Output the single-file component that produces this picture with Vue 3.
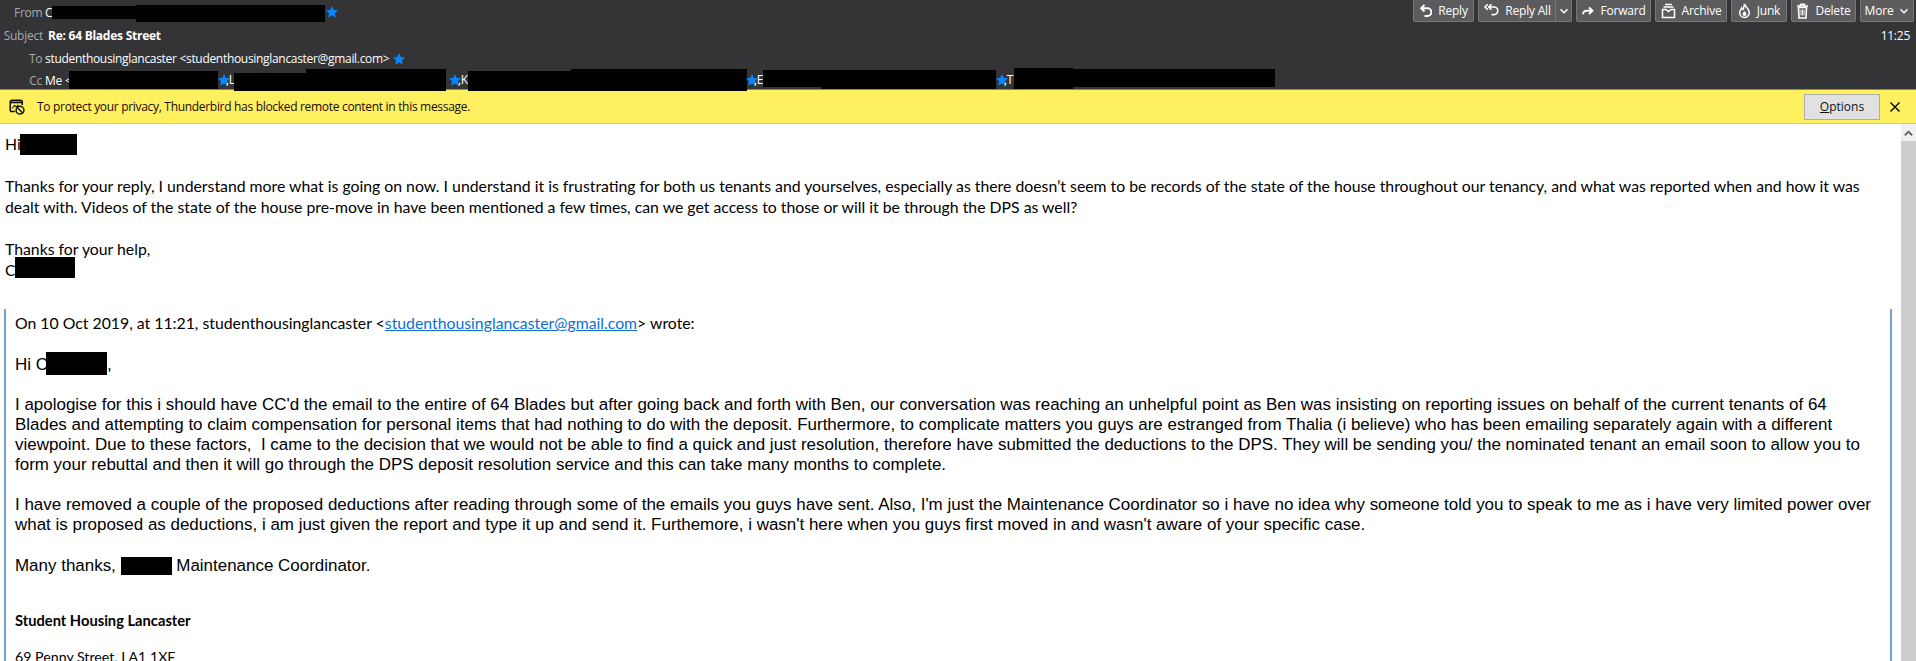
<template>
  <div class="window">
    <header class="headers">
      <div class="row row-from">
        <span class="label from-label">From</span>
        <span class="val">C<span class="redact r-from1" /><span class="redact r-from2" /></span>
        <svg class="star" viewBox="0 0 24 24"><path :d="starPath" /></svg>
        <div class="toolbar">
          <button
            v-for="b in buttons"
            :key="b.name"
            class="tb"
            :class="{ split: b.split }"
            :style="{ width: b.width + 'px' }"
          >
            <span class="tb-main">
              <svg v-if="b.w" class="tb-icon" :style="{ width: b.w + 'px' }" :viewBox="'0 0 ' + b.w + ' 16'" v-html="b.svg" />
              <span>{{ b.name }}</span>
              <svg v-if="b.more" class="chev" viewBox="0 0 10 10"><path d="M1.5 3.200 5 6.700l3.500-3.500" /></svg>
            </span>
            <span v-if="b.split" class="split-part">
              <svg class="chev" viewBox="0 0 10 10"><path d="M1.500 3.200 5 6.700l3.500-3.500" /></svg>
            </span>
          </button>
        </div>
      </div>
      <div class="row row-subject">
        <span class="label subj-label">Subject</span>
        <span class="subject">Re: 64 Blades Street</span>
        <span class="time">11:25</span>
      </div>
      <div class="row row-to">
        <span class="label to-label">To</span>
        <span class="val to-val">studenthousinglancaster &lt;studenthousinglancaster@gmail.com&gt;</span>
        <svg class="star to-star" viewBox="0 0 24 24"><path :d="starPath" /></svg>
      </div>
      <div class="row row-cc">
        <span class="label cc-label">Cc</span>
        <span class="val">Me &lt;</span>
        <span class="redact" style="left: 69px; width: 149px; top: 0; height: 18px" />
        <svg class="star cc-star" style="left: 217px" viewBox="0 0 24 24"><path :d="starPath" /></svg>
        <span class="val cc-name" style="left: 226px">,L</span>
        <span class="redact" style="left: 234px; width: 72px; top: 2px; height: 18px" />
        <span class="redact" style="left: 306px; width: 140px; top: -2px; height: 22px" />
        <svg class="star cc-star" style="left: 448px" viewBox="0 0 24 24"><path :d="starPath" /></svg>
        <span class="val cc-name" style="left: 458px">,K</span>
        <span class="redact" style="left: 468px; width: 103px; top: 0; height: 20px" />
        <span class="redact" style="left: 571px; width: 176px; top: -2px; height: 22px" />
        <svg class="star cc-star" style="left: 745px" viewBox="0 0 24 24"><path :d="starPath" /></svg>
        <span class="val cc-name" style="left: 754px">,E</span>
        <span class="redact" style="left: 763px; width: 58px; top: -1px; height: 17px" />
        <span class="redact" style="left: 821px; width: 175px; top: -1px; height: 19px" />
        <svg class="star cc-star" style="left: 995px" viewBox="0 0 24 24"><path :d="starPath" /></svg>
        <span class="val cc-name" style="left: 1004px">,T</span>
        <span class="redact" style="left: 1014px; width: 59px; top: -3px; height: 21px" />
        <span class="redact" style="left: 1073px; width: 202px; top: -2px; height: 18px" />
      </div>
    </header>

    <div class="notice">
      <svg class="notice-icon" viewBox="0 0 16 16">
        <path d="M6 12.500H3A1.800 1.800 0 0 1 1.200 10.700V3A1.800 1.800 0 0 1 3 1.200h8.500A1.800 1.800 0 0 1 13.300 3v3" fill="none" stroke="#111" stroke-width="1.500" />
        <path d="M1.500 3.400h11.500" stroke="#111" stroke-width="1.800" fill="none" />
        <path d="M3 9.500l2.500-3 1.800 1.500 2-2" stroke="#111" stroke-width="1.100" fill="none" />
        <circle cx="11" cy="11.200" r="3.900" fill="#fff05f" stroke="#111" stroke-width="1.500" />
        <path d="M8.300 8.500l5.400 5.400" stroke="#111" stroke-width="1.400" />
      </svg>
      <span class="notice-text">To protect your privacy, Thunderbird has blocked remote content in this message.</span>
      <button class="options"><u>O</u>ptions</button>
      <svg class="close" viewBox="0 0 12 12"><path d="M1.500 1.500l9 9M10.500 1.500l-9 9" /></svg>
    </div>

    <div class="content">
      <main class="message">
        <div class="reply">
          <p class="line">Hi<span class="redact r-hi" /></p>
          <p class="line gap1">Thanks for your reply, I understand more what is going on now. I understand it is frustrating for both us tenants and yourselves, especially as there doesn’t seem to be records of the state of the house throughout our tenancy, and what was reported when and how it was</p>
          <p class="line">dealt with. Videos of the state of the house pre-move in have been mentioned a few times, can we get access to those or will it be through the DPS as well?</p>
          <p class="line gap1">Thanks for your help,</p>
          <p class="line">C<span class="redact r-sign" /></p>
        </div>
        <blockquote class="quote">
          <p class="line">On 10 Oct 2019, at 11:21, studenthousinglancaster &lt;<a class="link">studenthousinglancaster@gmail.com</a>&gt; wrote:</p>
          <p class="aline hi-c">Hi C<span class="redact r-quote" />,</p>
          <div class="para">
            <p class="aline" v-for="l in para1" :key="l">{{ l }}</p>
          </div>
          <div class="para">
            <p class="aline" v-for="l in para2" :key="l">{{ l }}</p>
          </div>
          <p class="aline para many">Many thanks, <span class="redact r-many" /> Maintenance Coordinator.</p>
          <p class="line sig">Student Housing Lancaster</p>
          <p class="line addr">69 Penny Street, LA1 1XF</p>
        </blockquote>
      </main>
      <div class="scrollbar">
        <div class="sb-btn">
          <svg viewBox="0 0 10 8"><path d="M1 6.500 5 2.500l4 4" /></svg>
        </div>
        <div class="thumb" />
      </div>
    </div>
  </div>
</template>

<script setup>
const starPath =
  "M12 1.500l3.100 6.900 7.400.8-5.500 5 1.500 7.400L12 17.900l-6.500 3.700L7 14.200l-5.500-5 7.400-.8z";

const buttons = [
  {
    name: "Reply",
    width: 61,
    w: 13,
    svg: '<path d="M5.500 2 2.200 5.200l3.300 3.300M2.500 5.200H8.500a3.900 3.900 0 0 1 0 7.800H5.500" fill="none" stroke="#fff" stroke-width="1.900"/>',
  },
  {
    name: "Reply All",
    width: 94,
    w: 16,
    split: true,
    svg: '<path d="M4.800 1.200 2 4l2.800 2.800M8.500 1.200 5.700 4l2.800 2.800M6.500 4H11a3.800 3.800 0 0 1 0 7.600H8.500" fill="none" stroke="#fff" stroke-width="1.600"/>',
  },
  {
    name: "Forward",
    width: 75,
    w: 13,
    svg: '<path d="M8 4.500l3.500 3.200L8 11M11 7.700H5.500A3.500 3.500 0 0 0 2 11.200" fill="none" stroke="#fff" stroke-width="1.900"/>',
  },
  {
    name: "Archive",
    width: 72,
    w: 15,
    svg: '<path d="M4 1.500h7M2.500 4h10" fill="none" stroke="#fff" stroke-width="1.400"/><path d="M1.500 6.500h3.500l2.500 2 2.500-2h3.500V14.500h-12z" fill="none" stroke="#fff" stroke-width="1.500"/>',
  },
  {
    name: "Junk",
    width: 56,
    w: 13,
    svg: '<path d="M6.500 1c.5 2.500 4.800 4.500 4.800 8.700a4.800 4.800 0 0 1-9.600 0C1.700 7.500 3.200 6.500 3.700 5c.5 1 1 1.500 1.600 1.500C5.800 5 6 3 6.500 1z" fill="none" stroke="#fff" stroke-width="1.500"/><path d="M6.500 8c.5 1 2 1.500 2 3a2 2 0 0 1-4 0c0-1.500 1.500-2 2-3z" fill="#fff"/>',
  },
  {
    name: "Delete",
    width: 65,
    w: 13,
    svg: '<path d="M1 3h11M4.500 3V1.200h4V3" fill="none" stroke="#fff" stroke-width="1.500"/><path d="M2.500 4.500h8L10 15H3z" fill="none" stroke="#fff" stroke-width="1.600"/><path d="M5 6.500v6M6.500 6.500v6M8 6.500v6" stroke="#fff" stroke-width=".9"/>',
  },
  { name: "More", width: 54, w: 0, more: true, svg: "" },
];

const para1 = [
  "I apologise for this i should have CC'd the email to the entire of 64 Blades but after going back and forth with Ben, our conversation was reaching an unhelpful point as Ben was insisting on reporting issues on behalf of the current tenants of 64",
  "Blades and attempting to claim compensation for personal items that had nothing to do with the deposit. Furthermore, to complicate matters you guys are estranged from Thalia (i believe) who has been emailing separately again with a different",
  "viewpoint. Due to these factors,  I came to the decision that we would not be able to find a quick and just resolution, therefore have submitted the deductions to the DPS. They will be sending you/ the nominated tenant an email soon to allow you to",
  "form your rebuttal and then it will go through the DPS deposit resolution service and this can take many months to complete.",
];

const para2 = [
  "I have removed a couple of the proposed deductions after reading through some of the emails you guys have sent. Also, I'm just the Maintenance Coordinator so i have no idea why someone told you to speak to me as i have very limited power over",
  "what is proposed as deductions, i am just given the report and type it up and send it. Furthemore, i wasn't here when you guys first moved in and wasn't aware of your specific case.",
];
</script>

<style>
html,
body {
  margin: 0;
  overflow: hidden;
}
</style>

<style scoped>
.window {
  width: 1916px;
  height: 661px;
  display: flex;
  flex-direction: column;
  overflow: hidden;
  background: #fff;
  font-family: "Open Sans", "Noto Sans", sans-serif;
}

.headers {
  height: 89px;
  flex-shrink: 0;
  background: #343436;
  color: #fff;
  font-size: 12px;
  letter-spacing: -0.25px;
  position: relative;
  z-index: 1;
}
.row {
  display: flex;
  align-items: center;
  position: relative;
}
.row-from {
  height: 24px;
}
.row-subject {
  height: 22px;
}
.row-to {
  height: 25px;
}
.row-cc {
  height: 18px;
}
.label {
  color: #a9a9ab;
  text-align: right;
  flex-shrink: 0;
}
.from-label {
  margin-left: 14px;
  width: 28px;
  margin-right: 3px;
}
.subj-label {
  margin-left: 3px;
  width: 40px;
  margin-right: 5px;
}
.to-label {
  margin-left: 29px;
  width: 13px;
  margin-right: 3px;
}
.cc-label {
  margin-left: 28px;
  width: 14px;
  margin-right: 3px;
}
.val {
  white-space: nowrap;
}
.to-val {
  letter-spacing: -0.31px;
}
.subject {
  font-weight: 700;
}
.time {
  margin-left: auto;
  margin-right: 6px;
}
.star {
  width: 14px;
  height: 14px;
  fill: #0a84ff;
  flex-shrink: 0;
}
.to-star {
  margin-left: 3px;
}
.cc-star {
  position: absolute;
  top: 2px;
}
.cc-name {
  position: absolute;
  top: 0;
}
.redact {
  background: #000;
  position: absolute;
}
/* inline blocks with a zero margin box, so they don't stretch the line */
.r-from1,
.r-from2,
.r-hi,
.r-sign,
.r-quote,
.r-many {
  position: static;
  display: inline-block;
}
.r-from1 {
  width: 84px;
  height: 13px;
  margin: -11px 0 -2px;
}
.r-from2 {
  width: 189px;
  height: 17px;
  margin: -12px 0 -5px;
}

.toolbar {
  margin-left: auto;
  display: flex;
  gap: 4px;
  margin-right: 2px;
  align-self: flex-start;
}
.tb {
  height: 22px;
  box-sizing: border-box;
  background: #5c5c5e;
  border: 1px solid #78787a;
  border-top: none;
  border-radius: 0 0 2px 2px;
  color: #fff;
  font: 12px "Open Sans", "Noto Sans", sans-serif;
  letter-spacing: -0.2px;
  display: flex;
  align-items: stretch;
  padding: 0;
}
.tb-main {
  flex: 1;
  display: flex;
  align-items: center;
  justify-content: center;
  gap: 6px;
}
.split-part {
  width: 16px;
  box-sizing: border-box;
  display: flex;
  align-items: center;
  justify-content: center;
  border-left: 1px solid #78787a;
}
.tb-icon {
  height: 16px;
}
.chev {
  width: 10px;
  height: 10px;
}
.chev path {
  fill: none;
  stroke: #fff;
  stroke-width: 1.500;
}

.notice {
  height: 35px;
  box-sizing: border-box;
  flex-shrink: 0;
  background: #fff05f;
  border-top: 1px solid #8e8a4c;
  border-bottom: 1px solid #d9cf55;
  display: flex;
  align-items: center;
  padding-left: 9px;
  font-size: 12px;
  letter-spacing: -0.31px;
  color: #1a0a0a;
}
.notice-icon {
  width: 16px;
  height: 16px;
  margin-right: 12px;
}
.notice-text {
  flex: 1;
}
.options {
  width: 76px;
  height: 26px;
  background: #e1e1e1;
  border: 1px solid #adadad;
  font: 12px "Open Sans", "Noto Sans", sans-serif;
  color: #111;
  padding: 0;
  margin-right: 9px;
}
.close {
  width: 12px;
  height: 12px;
  margin-right: 15px;
}
.close path {
  stroke: #111;
  stroke-width: 1.500;
  fill: none;
}

.content {
  flex: 1;
  min-height: 0;
  display: flex;
}
.message {
  flex: 1;
  min-width: 0;
  overflow: hidden;
  color: #000;
}
.reply {
  padding: 9px 0 0 5px;
}
p {
  margin: 0;
  white-space: pre;
}
.line {
  font-family: Lato, "Open Sans", sans-serif;
  font-size: 15.8px;
  line-height: 21px;
  height: 21px;
}
.gap1 {
  margin-top: 21px;
}
.r-hi {
  width: 57px;
  height: 21px;
  margin: -16px 0 -5px -1px;
}
.r-sign {
  width: 60px;
  height: 21px;
  margin: -19px 0 -2px -1px;
}
.quote {
  margin: 29px 0 0 4px;
  width: 1888px;
  box-sizing: border-box;
  border-left: 2px solid #729fcf;
  border-right: 2px solid #729fcf;
  padding: 3px 0 0 9px;
}
.link {
  color: #0a6fd6;
  text-decoration: underline;
}
.aline {
  font-family: "Liberation Sans", Arial, sans-serif;
  font-size: 16.97px;
  line-height: 20px;
  height: 20px;
}
.hi-c {
  margin-top: 22px;
}
.r-quote {
  width: 61px;
  height: 23px;
  margin: -18px 0 -5px -2px;
}
.r-many {
  width: 51px;
  height: 18px;
  margin: -14px 0 -4px;
}
.para {
  margin-top: 20px;
}
.many {
  margin-top: 21px;
}
.sig {
  font-weight: 700;
  font-size: 14.7px;
  margin-top: 34px;
}
.addr {
  font-size: 14.2px;
  margin-top: 15px;
}

.scrollbar {
  width: 15px;
  flex-shrink: 0;
  background: #f0f0f0;
  display: flex;
  flex-direction: column;
}
.sb-btn {
  height: 17px;
  flex-shrink: 0;
  display: flex;
  align-items: center;
  justify-content: center;
}
.sb-btn svg {
  width: 9px;
  height: 8px;
}
.sb-btn path {
  fill: none;
  stroke: #606060;
  stroke-width: 2;
}
.thumb {
  flex: 1;
  background: #cdcdcd;
}
</style>
